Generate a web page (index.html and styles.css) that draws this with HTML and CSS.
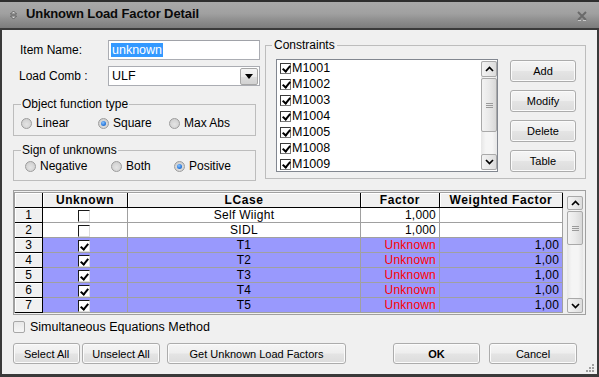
FILE: index.html
```html
<!DOCTYPE html>
<html>
<head>
<meta charset="utf-8">
<title>Unknown Load Factor Detail</title>
<link rel="stylesheet" href="styles.css">
</head>
<body>
<div class="window">
  <div class="titlebar">
    <svg class="title-icon" width="7" height="10" viewBox="0 0 7 10">
      <path d="M0.5 4 L3.5 1 L6.5 4 Z" fill="#d8d8d8" stroke="#4a4a4a" stroke-width="0.8"/>
      <path d="M0.5 6 L3.5 9 L6.5 6 Z" fill="#d8d8d8" stroke="#4a4a4a" stroke-width="0.8"/>
    </svg>
    <span class="title">Unknown Load Factor Detail</span>
    <svg class="close" width="10" height="10" viewBox="0 0 10 10">
      <path d="M1 1 L9 9 M9 1 L1 9" stroke="#6a6a6a" stroke-width="2"/>
      <path d="M1 9.5 L4 9.5 M6 9.5 L9 9.5" stroke="#c8c8c8" stroke-width="1"/>
    </svg>
  </div>

  <div class="content">
    <div class="top">
      <div class="left">
        <div class="field-row">
          <span class="lbl">Item Name:</span>
          <div class="textbox"><span class="selected-text">unknown</span></div>
        </div>
        <div class="field-row row-combo">
          <span class="lbl">Load Comb :</span>
          <div class="combo">
            <span class="combo-text">ULF</span>
            <span class="drop">
              <svg width="8" height="5" viewBox="0 0 8 5"><path d="M0 0 H8 L4 5 Z" fill="#000"/></svg>
            </span>
          </div>
        </div>

        <fieldset class="group g1">
          <legend>Object function type</legend>
          <div class="radios r1">
            <span class="radio"><span class="dot"></span>Linear</span>
            <span class="radio"><span class="dot on"></span>Square</span>
            <span class="radio"><span class="dot"></span>Max Abs</span>
          </div>
        </fieldset>

        <fieldset class="group g2">
          <legend>Sign of unknowns</legend>
          <div class="radios r2">
            <span class="radio"><span class="dot"></span>Negative</span>
            <span class="radio"><span class="dot"></span>Both</span>
            <span class="radio"><span class="dot on"></span>Positive</span>
          </div>
        </fieldset>
      </div>

      <fieldset class="group constraints">
        <legend>Constraints</legend>
        <div class="cons-body">
          <div class="listbox">
            <div class="items">
              <div class="item"><span class="lcb"></span>M1001</div>
              <div class="item"><span class="lcb"></span>M1002</div>
              <div class="item"><span class="lcb"></span>M1003</div>
              <div class="item"><span class="lcb"></span>M1004</div>
              <div class="item"><span class="lcb"></span>M1005</div>
              <div class="item"><span class="lcb"></span>M1008</div>
              <div class="item"><span class="lcb"></span>M1009</div>
            </div>
            <div class="vscroll list-scroll">
              <div class="sb-btn up"><svg width="9" height="6" viewBox="0 0 9 6"><path d="M1 5 L4.5 1.5 L8 5" fill="none" stroke="#000" stroke-width="1.7"/></svg></div>
              <div class="sb-thumb"><svg width="7" height="5" viewBox="0 0 7 5"><path d="M0 0.5 H7 M0 2.5 H7 M0 4.5 H7" stroke="#9a9a9a" stroke-width="1"/></svg></div>
              <div class="sb-track"></div>
              <div class="sb-btn down"><svg width="9" height="6" viewBox="0 0 9 6"><path d="M1 1 L4.5 4.5 L8 1" fill="none" stroke="#000" stroke-width="1.7"/></svg></div>
            </div>
          </div>
          <div class="btn-col">
            <button class="btn">Add</button>
            <button class="btn">Modify</button>
            <button class="btn">Delete</button>
            <button class="btn">Table</button>
          </div>
        </div>
      </fieldset>
    </div>

    <div class="table-box">
      <div class="grid">
        <div class="hc"></div><div class="hc">Unknown</div><div class="hc">LCase</div><div class="hc">Factor</div><div class="hc">Weighted Factor</div>

        <div class="rh">1</div><div class="c cc"><span class="tcb"></span></div><div class="c ctr">Self Wiight</div><div class="c num">1,000</div><div class="c"></div>
        <div class="rh">2</div><div class="c cc"><span class="tcb"></span></div><div class="c ctr">SIDL</div><div class="c num">1,000</div><div class="c"></div>
        <div class="rh">3</div><div class="c sel cc"><span class="tcb on"></span></div><div class="c sel ctr">T1</div><div class="c sel num red">Unknown</div><div class="c sel num">1,00</div>
        <div class="rh">4</div><div class="c sel cc"><span class="tcb on"></span></div><div class="c sel ctr">T2</div><div class="c sel num red">Unknown</div><div class="c sel num">1,00</div>
        <div class="rh">5</div><div class="c sel cc"><span class="tcb on"></span></div><div class="c sel ctr">T3</div><div class="c sel num red">Unknown</div><div class="c sel num">1,00</div>
        <div class="rh">6</div><div class="c sel cc"><span class="tcb on"></span></div><div class="c sel ctr">T4</div><div class="c sel num red">Unknown</div><div class="c sel num">1,00</div>
        <div class="rh">7</div><div class="c sel cc"><span class="tcb on"></span></div><div class="c sel ctr">T5</div><div class="c sel num red">Unknown</div><div class="c sel num">1,00</div>
      </div>
      <div class="vscroll table-scroll">
        <div class="sb-btn up"><svg width="9" height="6" viewBox="0 0 9 6"><path d="M1 5 L4.5 1.5 L8 5" fill="none" stroke="#000" stroke-width="1.7"/></svg></div>
        <div class="sb-thumb"><svg width="7" height="5" viewBox="0 0 7 5"><path d="M0 0.5 H7 M0 2.5 H7 M0 4.5 H7" stroke="#9a9a9a" stroke-width="1"/></svg></div>
        <div class="sb-track"></div>
        <div class="sb-btn down"><svg width="9" height="6" viewBox="0 0 9 6"><path d="M1 1 L4.5 4.5 L8 1" fill="none" stroke="#000" stroke-width="1.7"/></svg></div>
      </div>
    </div>

    <div class="simul"><span class="scb"></span>Simultaneous Equations Method</div>

    <div class="bottom-buttons">
      <button class="btn b-select">Select All</button>
      <button class="btn b-unselect">Unselect All</button>
      <button class="btn b-get">Get Unknown Load Factors</button>
      <button class="btn b-ok">OK</button>
      <button class="btn b-cancel">Cancel</button>
    </div>
  </div>

  <svg class="grip" width="9" height="9" viewBox="0 0 9 9">
    <rect x="7" y="1" width="2" height="2" fill="#a0a0a0"/>
    <rect x="4" y="4" width="2" height="2" fill="#a0a0a0"/>
    <rect x="7" y="4" width="2" height="2" fill="#a0a0a0"/>
    <rect x="1" y="7" width="2" height="2" fill="#a0a0a0"/>
    <rect x="4" y="7" width="2" height="2" fill="#a0a0a0"/>
    <rect x="7" y="7" width="2" height="2" fill="#a0a0a0"/>
  </svg>
</div>
</body>
</html>
```

FILE: styles.css
```css
* { box-sizing: border-box; }

html, body {
  margin: 0;
  padding: 0;
}

body {
  width: 599px;
  height: 377px;
  overflow: hidden;
  background: #f0f0f0;
  font-family: "Liberation Sans", Arial, sans-serif;
  font-size: 12px;
  color: #000;
}

.window {
  position: relative;
  width: 599px;
  height: 377px;
  display: flex;
  flex-direction: column;
  background: #f0f0f0;
}

/* ---------- title bar ---------- */
.titlebar {
  height: 30px;
  flex: none;
  display: flex;
  align-items: flex-start;
  border-top: 2px solid #2e2e2e;
  border-bottom: 2px solid #3a3a3a;
  background: linear-gradient(#a9a9a9 0%, #a0a0a0 45%, #8e8e8e 70%, #7c7c7c 100%);
}

.title-icon {
  margin-left: 10px;
  margin-top: 8px;
}

.title {
  margin-left: 9px;
  margin-top: 4px;
  font-size: 13px;
  line-height: 15px;
  font-weight: bold;
  color: #0a0a0a;
  letter-spacing: -0.1px;
}

.close {
  margin-left: auto;
  margin-right: 12px;
  margin-top: 9px;
}

/* ---------- content ---------- */
.content {
  flex: 1;
  border-left: 2px solid #3a3a3a;
  border-right: 2px solid #3a3a3a;
  border-bottom: 3px solid #3a3a3a;
  padding: 8px 11px 0 11px;
}

.top {
  display: flex;
  align-items: flex-start;
  gap: 9px;
}

.left {
  width: 243px;
  margin-top: 2px;
}

.field-row {
  display: grid;
  grid-template-columns: 88px 152px;
  align-items: center;
  padding-left: 7px;
  height: 20px;
}

.row-combo {
  margin-top: 6px;
  padding-left: 6px;
  grid-template-columns: 89px 152px;
}

.lbl {
  line-height: 14px;
}

.textbox {
  height: 20px;
  border: 1px solid #abadb3;
  border-top-color: #a0a2a8;
  background: #fff;
  display: flex;
  align-items: center;
  padding-left: 2px;
}

.selected-text {
  background: #3399ff;
  color: #fff;
  line-height: 14px;
  padding: 0 1px;
  font-size: 12.5px;
}

.combo {
  height: 20px;
  border: 1px solid #abadb3;
  background: #fff;
  display: flex;
  align-items: center;
}

.combo-text {
  flex: 1;
  padding-left: 3px;
  font-size: 12.5px;
}

.drop {
  width: 18px;
  height: 17px;
  margin-right: 1px;
  border: 1px solid #a6a6a6;
  border-radius: 2px;
  background: linear-gradient(#f4f4f4 0%, #ececec 50%, #dedede 51%, #d2d2d2 100%);
  display: flex;
  align-items: center;
  justify-content: center;
}

/* ---------- group boxes ---------- */
fieldset.group {
  margin: 0;
  min-width: 0;
  border: 1px solid #bdbdbd;
  padding: 0;
}

fieldset.group legend {
  padding: 0 1px;
  line-height: 14px;
  font-size: 12px;
}

.g1 {
  margin-top: 11px !important;
  padding: 5px 0 5px 7px !important;
}

.g2 {
  margin-top: 7px !important;
  padding: 2px 0 7px 7px !important;
}

.radios {
  display: grid;
  align-items: center;
  height: 14px;
}

.r1 { grid-template-columns: 77px 71px auto; }
.r2 { grid-template-columns: 86px 63px auto; margin-left: 4px; }

.radio {
  display: flex;
  align-items: center;
  gap: 4px;
  line-height: 14px;
}

.dot {
  width: 11px;
  height: 11px;
  border-radius: 50%;
  border: 1px solid #9c9c9c;
  background: radial-gradient(circle at 50% 60%, #e4e4e4 0%, #d4d4d4 60%, #c8c8c8 100%);
  display: flex;
  align-items: center;
  justify-content: center;
}

.dot.on::after {
  content: "";
  width: 5px;
  height: 5px;
  border-radius: 50%;
  background: radial-gradient(circle at 40% 35%, #8cc4ff 0%, #2f7fe0 55%, #1a56b0 100%);
}

/* ---------- constraints ---------- */
.constraints {
  width: 321px;
  padding: 7px 9px 6px 10px !important;
}

.constraints legend {
  margin-left: -4px;
  padding: 0 2px !important;
}

.cons-body {
  display: flex;
  align-items: flex-start;
}

.listbox {
  width: 222px;
  height: 113px;
  border: 1px solid #828790;
  background: #fff;
  display: flex;
  padding: 0 0 0 0;
}

.items {
  flex: 1;
  padding-left: 3px;
}

.item {
  height: 16px;
  display: flex;
  align-items: center;
  gap: 1px;
  line-height: 14px;
  font-size: 12.5px;
}

.lcb {
  position: relative;
  width: 11px;
  height: 11px;
  border: 1px solid #3a3a3a;
  border-right-color: #7a7a7a;
  border-bottom-color: #7a7a7a;
  background: #fff;
  flex: none;
}

.lcb::after,
.tcb.on::after {
  content: "";
  position: absolute;
  left: 3px;
  top: 0px;
  width: 3px;
  height: 6px;
  border: solid #000;
  border-width: 0 2px 2px 0;
  transform: rotate(40deg);
}

.btn-col {
  display: flex;
  flex-direction: column;
  gap: 8px;
  margin-left: 12px;
  margin-top: 1px;
}

.btn {
  font-family: "Liberation Sans", Arial, sans-serif;
  font-size: 11px;
  color: #000;
  width: 66px;
  height: 22px;
  padding: 0;
  border: 1px solid #acacac;
  border-radius: 3px;
  background: linear-gradient(#f5f5f5 0%, #eeeeee 48%, #e4e4e4 52%, #dcdcdc 100%);
  box-shadow: inset 0 0 0 1px #fbfbfb;
}

/* ---------- scrollbars ---------- */
.vscroll {
  width: 16px;
  display: flex;
  flex-direction: column;
  background: linear-gradient(90deg, #e6e6e6 0%, #f5f5f5 30%, #f5f5f5 70%, #e6e6e6 100%);
}

.list-scroll {
  height: 109px;
  margin-top: 1px;
  margin-right: 0;
}

.sb-btn {
  height: 16px;
  border: 1px solid #a9a9a9;
  border-radius: 2px;
  background: linear-gradient(90deg, #f3f3f3 0%, #e9e9e9 50%, #dcdcdc 100%);
  display: flex;
  align-items: center;
  justify-content: center;
  flex: none;
}

.sb-thumb {
  height: 54px;
  margin-top: 1px;
  border: 1px solid #a9a9a9;
  border-radius: 2px;
  background: linear-gradient(90deg, #f3f3f3 0%, #e9e9e9 50%, #d8d8d8 100%);
  display: flex;
  align-items: center;
  justify-content: center;
  flex: none;
}

.sb-track { flex: 1; }

.table-scroll {
  height: 117px;
  margin-left: 4px;
  margin-top: 4px;
}

.table-scroll .sb-btn.up { height: 14px; }
.table-scroll .sb-btn.down { height: 15px; }
.table-scroll .sb-thumb { height: 34px; margin-top: 1px; }

/* ---------- table ---------- */
.table-box {
  width: 573px;
  margin-top: 9px;
  border: 1px solid #a0a0a0;
  padding: 1px 2px 1px 0;
  display: flex;
  align-items: flex-start;
  background: #f0f0f0;
}

.grid {
  display: grid;
  grid-template-columns: 28px 85px 233px 79px 123px;
  grid-auto-rows: 15px;
  border-left: 1px solid #a0a0a0;
  border-top: 1px solid #a0a0a0;
}

.hc, .rh {
  background: #f0f0f0;
  border-right: 1px solid #000;
  border-bottom: 1px solid #000;
  box-shadow: inset 1px 1px 0 #fff;
  display: flex;
  align-items: center;
  justify-content: center;
  line-height: 14px;
}

.hc {
  font-weight: bold;
  letter-spacing: 0.6px;
}

.rh {
  font-size: 12px;
}

.c {
  background: #fff;
  border-right: 1px solid #a0a0a0;
  border-bottom: 1px solid #a0a0a0;
  display: flex;
  align-items: center;
  line-height: 14px;
  padding: 0 3px 0 3px;
  white-space: nowrap;
}

.c.sel { background: #9999fd; }
.ctr { justify-content: center; letter-spacing: 0.3px; }
.num { justify-content: flex-end; letter-spacing: 0.2px; }
.red { color: #ff0000; }

.cc {
  justify-content: center;
  align-items: flex-end;
  padding: 0 0 0 0;
}

.tcb {
  position: relative;
  width: 12px;
  height: 12px;
  background: #fff;
  border-top: 1px solid #1a1a1a;
  border-left: 1px solid #1a1a1a;
  border-right: 1px solid #dcdcdc;
  border-bottom: 1px solid #dcdcdc;
  margin-right: 2px;
}

.tcb.on::after {
  left: 3px;
  top: 1px;
}

/* ---------- bottom ---------- */
.simul {
  margin-top: 5px;
  display: flex;
  align-items: center;
  gap: 5px;
  line-height: 14px;
  font-size: 12.5px;
}

.scb {
  width: 12px;
  height: 12px;
  border: 1px solid #a8a8a8;
  border-radius: 2px;
  background: linear-gradient(#e8e8e8, #f6f6f6);
}

.bottom-buttons {
  margin-top: 9px;
  display: flex;
}

.bottom-buttons .btn { height: 21px; }
.b-select { width: 67px; }
.b-unselect { width: 78px; margin-left: 2px; }
.b-get { width: 179px; margin-left: 7px; }
.b-ok { width: 87px; margin-left: 47px; font-weight: bold; }
.b-cancel { width: 88px; margin-left: 9px; }

.grip {
  position: absolute;
  right: 5px;
  bottom: 5px;
}
```
